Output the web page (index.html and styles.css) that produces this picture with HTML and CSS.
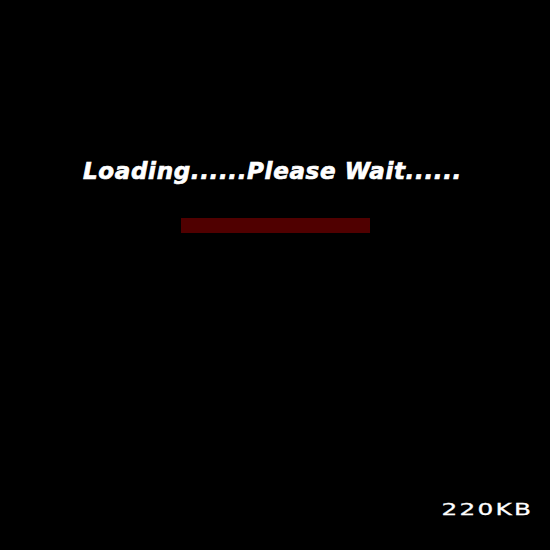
FILE: index.html
```html
<!DOCTYPE html>
<html>
<head>
<meta charset="utf-8">
<link rel="stylesheet" href="styles.css">
</head>
<body>
<div class="screen">
  <div class="loader">
    <div class="message">Loading......Please Wait......</div>
    <div class="bar"></div>
  </div>
  <div class="size">220KB</div>
</div>
</body>
</html>
```
FILE: styles.css
```css
html, body {
  margin: 0;
  padding: 0;
  background: #000;
}
.screen {
  width: 550px;
  height: 550px;
  display: flex;
  flex-direction: column;
  background: #000;
}
.loader {
  flex: 1;
  display: flex;
  flex-direction: column;
  align-items: center;
  padding-top: 154px;
}
.message {
  font-family: "DejaVu Sans", sans-serif;
  font-weight: bold;
  font-style: italic;
  font-size: 23px;
  line-height: 34px;
  color: #fff;
  letter-spacing: 0.65px;
  -webkit-text-stroke: 0.7px #fff;
  margin-left: -5px;
}
.bar {
  margin-top: 30px;
  width: 189px;
  height: 15px;
  background: #500000;
}
.size {
  align-self: flex-end;
  margin: 0 17px 31px 0;
  font-family: "DejaVu Sans", sans-serif;
  font-size: 16.5px;
  line-height: 18px;
  color: #fff;
  letter-spacing: 1.5px;
  -webkit-text-stroke: 0.3px #fff;
  transform: scaleX(1.5);
  transform-origin: right center;
}
```
